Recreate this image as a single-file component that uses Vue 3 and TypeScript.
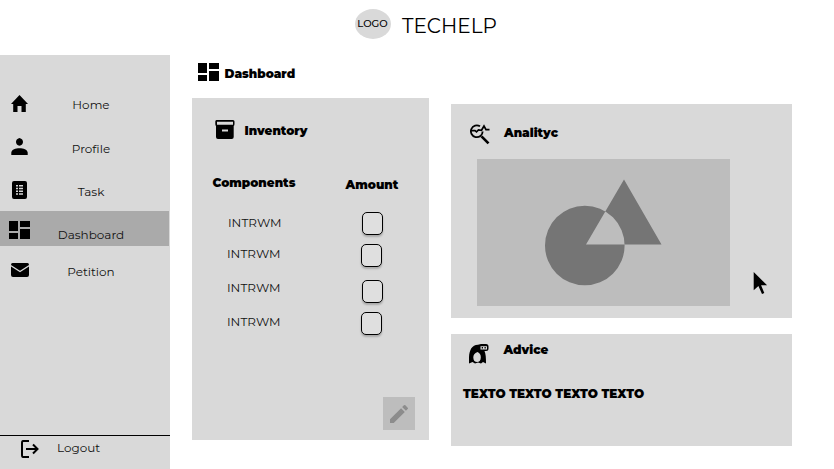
<script setup lang="ts">
interface NavItem {
  id: string
  label: string
  width: number
  height: number
  viewBox: string
  path: string
}

interface Component {
  name: string
  shifted: boolean
}

const dashboardPath = 'M0 0h9v10H0zM11 0h10v6H11zM0 12h9v6H0zM11 8h10v10H11z'

const navItems: NavItem[] = [
  { id: 'home', label: 'Home', width: 17, height: 17, viewBox: '0 0 17 17', path: 'M2.200 17V9H0L8.500 0 17 9h-2.200v8h-4.300v-6h-4v6z' },
  { id: 'profile', label: 'Profile', width: 17, height: 17, viewBox: '0 0 17 17', path: 'M8.500 0C11 .8 12 2.200 12 4S10.700 7.700 8.500 7.700 5 5.800 5 4 6 .8 8.500 0zM.3 17v-2.500C.8 11.500 4.500 10.300 8.500 10.300s7.700 1.200 8.200 4.200V17z' },
  { id: 'task', label: 'Task', width: 15, height: 18, viewBox: '0 0 15 18', path: 'M2 0h11q2 0 2 2v14q0 2-2 2H2q-2 0-2-2V2Q0 0 2 0zM4 4v1.500h2V4zM7 4v1.500h4V4zM4 6.700v1.500h2V6.700zM7 6.700v1.500h4V6.700zM4 9.500V11h2V9.500zM7 9.500V11h4V9.500zM4 12.200v1.500h2v-1.500zM7 12.200v1.500h4v-1.500z' },
  { id: 'dashboard', label: 'Dashboard', width: 21, height: 18, viewBox: '0 0 21 18', path: dashboardPath },
  { id: 'petition', label: 'Petition', width: 18, height: 14, viewBox: '0 0 18 14', path: 'M1.500 0h15Q18 0 18 2L9 7.800 0 2Q0 0 1.500 0zM0 3.500l9 5.700 9-5.700V12q0 2-2 2H2q-2 0-2-2z' },
]

const components: Component[] = [
  { name: 'INTRWM', shifted: false },
  { name: 'INTRWM', shifted: true },
  { name: 'INTRWM', shifted: false },
  { name: 'INTRWM', shifted: true },
]
</script>

<template>
  <div class="app">
    <header class="header">
      <div class="logo"><span>LOGO</span></div>
      <h1>TECHELP</h1>
    </header>

    <div class="body">
      <aside class="sidebar">
        <nav>
          <a v-for="item in navItems" :key="item.id" class="nav-item" :class="item.id">
            <span class="nav-icon">
              <svg :width="item.width" :height="item.height" :viewBox="item.viewBox">
                <path :d="item.path" fill-rule="evenodd" />
              </svg>
            </span>
            <span class="nav-label"><span>{{ item.label }}</span></span>
          </a>
        </nav>
        <a class="logout">
          <svg width="19" height="18" viewBox="0 0 19 18" fill="none" stroke="#000" stroke-width="2">
            <path d="M9 1H3Q2 1 2 3v12q0 2 1 2h6M6 9h11M13 4.500L17.500 9 13 13.500" />
          </svg>
          <span>Logout</span>
        </a>
      </aside>

      <main class="main">
        <div class="page-title">
          <svg width="21" height="18" viewBox="0 0 21 18"><path :d="dashboardPath" /></svg>
          <h2>Dashboard</h2>
        </div>

        <div class="columns">
          <section class="card inventory">
            <div class="card-title">
              <svg width="20" height="20" viewBox="0 0 20 20">
                <path fill-rule="evenodd" d="M1.500 0h16.500q1.500 0 1.500 1.500V4q0 1.500-.8 2v11q0 2-2 2H3q-2 0-2-2V6Q.3 5.500.3 4V1.500Q.3 0 1.500 0zM2 1.700v3h16v-3zM7 9.500v2h6v-2z" />
              </svg>
              <h2>Inventory</h2>
            </div>
            <div class="table">
              <div class="names">
                <h3>Components</h3>
                <span v-for="(item, i) in components" :key="i" class="name">{{ item.name }}</span>
              </div>
              <div class="amounts">
                <h3>Amount</h3>
                <span v-for="(item, i) in components" :key="i" class="box" :class="{ shifted: item.shifted }"></span>
              </div>
            </div>
            <button class="edit" aria-label="Edit">
              <svg width="24" height="24" viewBox="0 0 24 24">
                <path fill="#8c8c8c" d="M3 17.250V21h3.750L17.810 9.940l-3.750-3.750zM20.710 7.040a1 1 0 0 0 0-1.410l-2.340-2.340a1 1 0 0 0-1.410 0l-1.830 1.830 3.750 3.750z" />
              </svg>
            </button>
          </section>

          <div class="right">
            <section class="card analytics">
              <div class="card-title">
                <svg width="20" height="21" viewBox="0 0 20 21" fill="none" stroke="#000">
                  <path d="M10 2.300A5.900 5.900 0 1 0 12.700 7.500" stroke-width="1.800" />
                  <path d="M1 6.700h4l1.500 1.200L8.500 6l3 .3L14 2l2 3.700h3.500" stroke-width="1.700" />
                  <path d="M11.500 12.300l7 7" stroke-width="2.600" />
                </svg>
                <h2>Analityc</h2>
              </div>
              <div class="chart">
                <svg width="117" height="107" viewBox="0 0 117 107">
                  <path fill="#757575" fill-rule="evenodd" d="M0 66.500a39.800 39.800 0 1 0 79.600 0a39.800 39.800 0 1 0-79.600 0zM79 .5L116.500 65.500H41z" />
                </svg>
              </div>
              <svg class="cursor" width="15" height="24" viewBox="0 0 15 24">
                <path d="M.7 0v18.300l4.700-4.300 3.600 8 2.300-1-3.200-7.700h6z" />
              </svg>
            </section>

            <section class="card advice">
              <div class="card-title">
                <svg width="20" height="20" viewBox="0 0 20 20">
                  <path fill-rule="evenodd" d="M0 19.500C-.5 9 1 1 9 .7L12 0h5Q19.500 0 19.500 2.500V4.500Q19.500 7 17 7H15.500C16.800 10 17 14 17 19.500L14 18l-2 1.500-3-1-3 1L3.500 18zM8.500 8C5.500 9 4.300 11 4.300 13.500c0 3 1.700 4.500 3.800 4.500s3.700-1.500 3.700-4.500S11 9.500 8.500 8zM11.500 2.200v3.300h6.500V2.200z" />
                  <path d="M12.700 2.900h1.300v1.700h-1.300zM15.500 2.900h1.300v1.700h-1.300z" />
                </svg>
                <h2>Advice</h2>
              </div>
              <p>TEXTO TEXTO TEXTO TEXTO</p>
            </section>
          </div>
        </div>
      </main>
    </div>
  </div>
</template>

<style>
body {
  background: #fff;
}
</style>

<style scoped>
* {
  box-sizing: border-box;
}

.app {
  width: 834px;
  height: 469px;
  overflow: hidden;
  font-family: Montserrat, Inter, "Liberation Sans", sans-serif;
  font-size: 12px;
  line-height: 16px;
  color: #000;
  white-space: nowrap;
}

h1, h2, h3, p {
  margin: 0;
  font-size: 12px;
  font-weight: 900;
  line-height: 16px;
}

svg {
  display: block;
  flex: none;
}

.header {
  display: flex;
  height: 55px;
  padding: 9px 0 0 355px;
}

.logo {
  display: flex;
  justify-content: center;
  width: 36px;
  height: 30px;
  padding-top: 7px;
  margin-right: 11px;
  border-radius: 50%;
  background: #d9d9d9;
  font-size: 10px;
  font-weight: 500;
  text-indent: -1px;
}

.header h1 {
  padding-top: 4px;
  font-size: 20px;
  font-weight: 400;
  line-height: 26px;
}

.body {
  display: flex;
  height: 414px;
}

.sidebar {
  display: flex;
  flex-direction: column;
  justify-content: space-between;
  width: 170px;
  padding-top: 28px;
  background: #d9d9d9;
  color: #111;
}

.nav-item {
  display: flex;
  align-items: center;
  width: 169px;
  height: 43px;
}

.nav-icon {
  display: flex;
  justify-content: center;
  width: 39px;
}

.home .nav-icon,
.profile .nav-icon {
  padding-bottom: 2px;
}

.nav-label {
  display: flex;
  justify-content: center;
  width: 104px;
}

.profile .nav-label {
  padding-top: 2px;
}

.task {
  height: 42px;
}

.task .nav-label {
  padding-top: 3px;
}

.dashboard {
  height: 35px;
  background: #aaa;
}

.dashboard .nav-icon {
  padding-top: 3px;
}

.dashboard .nav-label {
  padding-top: 12px;
}

.petition {
  height: 49px;
}

.petition .nav-icon {
  padding-bottom: 2px;
}

.petition .nav-label {
  padding-top: 3px;
}

.logout {
  display: flex;
  gap: 18px;
  height: 34px;
  padding: 4px 0 0 20px;
  border-top: 1px solid #000;
}

.main {
  padding: 8px 0 0 22px;
}

.page-title {
  display: flex;
  gap: 6px;
  height: 35px;
  padding-left: 6px;
}

.page-title h2 {
  margin-left: -.5px;
  padding-top: 3px;
}

.columns {
  display: flex;
  gap: 22px;
}

.card {
  background: #d9d9d9;
}

.card-title {
  display: flex;
}

.inventory {
  display: flex;
  flex-direction: column;
  width: 237px;
  height: 342px;
  padding: 22px 14px 10px 20px;
}

.inventory .card-title {
  gap: 9.500px;
  padding-left: 3px;
}

.inventory h2 {
  padding-top: 3px;
}

.table {
  display: flex;
  padding-top: 35px;
}

.names {
  display: flex;
  flex-direction: column;
  width: 133.500px;
}

.names h3 {
  margin-left: .5px;
}

.name {
  height: 34px;
  padding-left: 15px;
  color: #111;
}

.name:nth-of-type(1) {
  height: 31px;
  margin-top: 24px;
  padding-left: 16px;
}

.amounts {
  padding-top: 2px;
}

.box {
  display: block;
  width: 21px;
  height: 23px;
  margin: 9px 0 0 16.500px;
  border: 1px solid #000;
  border-radius: 5px;
  background: #dfdfdf;
  box-shadow: 0 2px 2px rgba(0, 0, 0, 0.22);
}

.box:nth-of-type(1) {
  margin-top: 19px;
}

.box:nth-of-type(3) {
  margin-top: 13px;
}

.box.shifted {
  margin-left: 15.500px;
}

.edit {
  display: grid;
  place-items: center;
  width: 32px;
  height: 33px;
  margin: auto 0 0 auto;
  padding: 0;
  border: 0;
  background: #bdbdbd;
}

.right {
  padding-top: 6px;
}

.analytics {
  display: grid;
  grid-template-columns: 302px 15px;
  grid-template-rows: 55px 147px;
  width: 341px;
  height: 214px;
}

.analytics .card-title {
  grid-column: 1 / -1;
  gap: 14px;
  padding: 20px 0 0 19px;
}

.analytics h2 {
  padding-top: 1px;
}

.chart {
  width: 253px;
  height: 147px;
  margin-left: 26px;
  padding: 20px 0 0 68px;
  background: #bdbdbd;
}

.cursor {
  margin-top: 113px;
}

.advice {
  width: 341px;
  height: 112px;
  margin-top: 16px;
  padding: 10px 0 0 12px;
}

.advice .card-title {
  gap: 14.500px;
  padding-left: 6px;
}

.advice h2 {
  margin-top: -2px;
}

.advice p {
  margin-top: 22px;
}
</style>
